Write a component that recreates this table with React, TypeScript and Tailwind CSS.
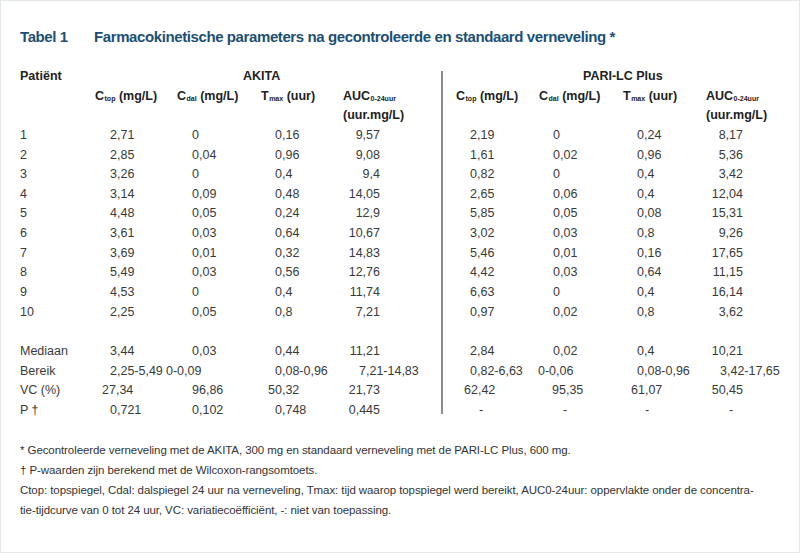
import React from "react";

type Row = { label: string; cells: string[]; cls?: string[] };

const AK_DEF = ["pl-[15px]", "pl-[15px]", "pl-[14px]", "justify-end pr-[61px]"];
const PA_DEF = ["pl-[14px]", "pl-[14px]", "pl-[14px]", "justify-end"];
const DEF = [...AK_DEF, ...PA_DEF];

const data: Row[] = [
  { label: "1", cells: ["2,71", "0", "0,16", "9,57", "2,19", "0", "0,24", "8,17"] },
  { label: "2", cells: ["2,85", "0,04", "0,96", "9,08", "1,61", "0,02", "0,96", "5,36"] },
  { label: "3", cells: ["3,26", "0", "0,4", "9,4", "0,82", "0", "0,4", "3,42"] },
  { label: "4", cells: ["3,14", "0,09", "0,48", "14,05", "2,65", "0,06", "0,4", "12,04"] },
  { label: "5", cells: ["4,48", "0,05", "0,24", "12,9", "5,85", "0,05", "0,08", "15,31"] },
  { label: "6", cells: ["3,61", "0,03", "0,64", "10,67", "3,02", "0,03", "0,8", "9,26"] },
  { label: "7", cells: ["3,69", "0,01", "0,32", "14,83", "5,46", "0,01", "0,16", "17,65"] },
  { label: "8", cells: ["5,49", "0,03", "0,56", "12,76", "4,42", "0,03", "0,64", "11,15"] },
  { label: "9", cells: ["4,53", "0", "0,4", "11,74", "6,63", "0", "0,4", "16,14"] },
  { label: "10", cells: ["2,25", "0,05", "0,8", "7,21", "0,97", "0,02", "0,8", "3,62"] },
];

const stats: Row[] = [
  { label: "Mediaan", cells: ["3,44", "0,03", "0,44", "11,21", "2,84", "0,02", "0,4", "10,21"] },
  {
    label: "Bereik",
    cells: ["2,25-5,49", "0-0,09", "0,08-0,96", "7,21-14,83", "0,82-6,63", "0-0,06", "0,08-0,96", "3,42-17,65"],
    cls: ["pl-[15px]", "pl-0 -ml-[11px]", "pl-[14px]", "pl-[16px]", "pl-[14px]", "pl-0 -ml-[1px]", "pl-[14px]", "pl-[14px]"],
  },
  {
    label: "VC (%)",
    cells: ["27,34", "96,86", "50,32", "21,73", "62,42", "95,35", "61,07", "50,45"],
    cls: ["pl-[7px]", "pl-[15px]", "pl-[7px]", "justify-end pr-[61px]", "pl-[8px]", "pl-[13px]", "pl-[8px]", "justify-end"],
  },
  {
    label: "P \u2020",
    cells: ["0,721", "0,102", "0,748", "0,445", "-", "-", "-", "-"],
    cls: ["pl-[15px]", "pl-[15px]", "pl-[14px]", "justify-end pr-[61px]", "pl-[23px]", "pl-[24px]", "pl-[22px]", "pl-[23px]"],
  },
];

function Cell({ children, className = "" }: { children?: React.ReactNode; className?: string }) {
  return <div className={"flex items-center whitespace-nowrap " + className}>{children}</div>;
}

function Sub({ children }: { children: React.ReactNode }) {
  return <span className="text-[7px] relative top-[3px] ml-[0.5px]">{children}</span>;
}

function HeaderCells() {
  return (
    <>
      <Cell className="font-bold text-[#222]">
        C<Sub>top</Sub>&nbsp;(mg/L)
      </Cell>
      <Cell className="font-bold text-[#222]">
        C<Sub>dal</Sub>&nbsp;(mg/L)
      </Cell>
      <Cell className="font-bold text-[#222]">
        T<Sub>max</Sub>&nbsp;(uur)
      </Cell>
      <Cell className="font-bold text-[#222]">
        AUC<Sub>0-24uur</Sub>
      </Cell>
    </>
  );
}

function RowCells({ row }: { row: Row }) {
  return (
    <>
      <Cell>{row.label}</Cell>
      {row.cells.map((c, i) => (
        <Cell key={i} className={row.cls ? row.cls[i] : DEF[i]}>
          {c}
        </Cell>
      ))}
    </>
  );
}

export default function App() {
  return (
    <div className="w-[800px] h-[553px] bg-white border border-[#e3e9eb] pl-[19px] pt-[26px] font-['Liberation_Sans',Arial,sans-serif] text-[#3a3a3a] overflow-hidden">
      <div className="flex h-[20px] items-center text-[15px] font-bold text-[#1d4f73] tracking-[-0.4px]">
        <div className="w-[74px]">Tabel 1</div>
        <div>Farmacokinetische parameters na gecontroleerde en standaard verneveling *</div>
      </div>

      <div className="mt-[19.5px] grid w-[723px] grid-cols-[75px_82px_84px_82px_98px_15px_83px_84px_83px_37px] grid-rows-[repeat(18,19.65px)] text-[12.5px]">
        <div className="[grid-column:6] [grid-row:1/19] mt-[4px] mb-[6px] border-l-2 border-[#8c8c8c]" />

        <Cell className="font-bold text-[#222]">Patiënt</Cell>
        <Cell className="col-span-4 font-bold text-[#222] pl-[148px]">AKITA</Cell>
        <Cell className="col-span-4 font-bold text-[#222] pl-[127px]">PARI-LC Plus</Cell>

        <Cell />
        <HeaderCells />
        <HeaderCells />

        <Cell />
        <Cell />
        <Cell />
        <Cell />
        <Cell className="font-bold text-[#222]">(uur.mg/L)</Cell>
        <Cell />
        <Cell />
        <Cell />
        <Cell className="font-bold text-[#222]">(uur.mg/L)</Cell>

        {data.map((r) => (
          <RowCells key={r.label} row={r} />
        ))}

        <Cell className="col-span-5" />
        <Cell className="col-span-4" />

        {stats.map((r) => (
          <RowCells key={r.label} row={r} />
        ))}
      </div>

      <div className="mt-[20px] text-[11.5px] leading-[20px] text-[#333] tracking-[-0.08px]">
        <div>* Gecontroleerde verneveling met de AKITA, 300 mg en standaard verneveling met de PARI-LC Plus, 600 mg.</div>
        <div>{"\u2020"} P-waarden zijn berekend met de Wilcoxon-rangsomtoets.</div>
        <div>
          Ctop: topspiegel, Cdal: dalspiegel 24 uur na verneveling, Tmax: tijd waarop topspiegel werd bereikt, AUC0-24uur: oppervlakte onder de concentra-
        </div>
        <div>tie-tijdcurve van 0 tot 24 uur, VC: variatieco{"\u00eb"}ffici{"\u00eb"}nt, -: niet van toepassing.</div>
      </div>
    </div>
  );
}
